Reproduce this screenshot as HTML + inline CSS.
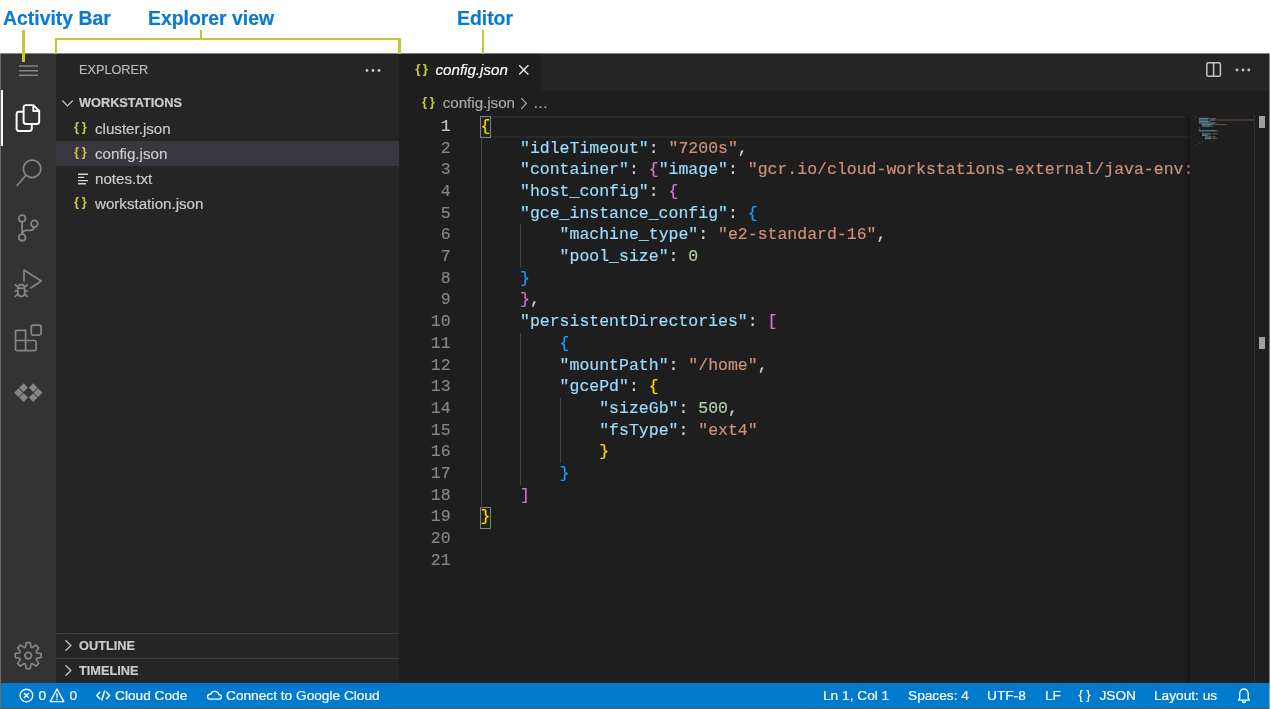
<!DOCTYPE html>
<html lang="en">
<head>
<meta charset="utf-8">
<title>Code editor layout</title>
<style>
*{box-sizing:border-box;margin:0;padding:0}
html,body{width:1271px;height:709px;overflow:hidden;background:#fff}
body{position:relative;font-family:"Liberation Sans",sans-serif;color:#ccc}
#all{position:absolute;left:0;top:0;width:1271px;height:709px;will-change:transform;-webkit-text-stroke:0.18px}
.abs{position:absolute}
.lbl{position:absolute;top:6px;font-weight:bold;font-size:19.4px;line-height:24px;color:#0a7ad1;white-space:nowrap}
.yl{position:absolute;background:#c6c532}
#frame{position:absolute;left:0;top:53px;width:1270px;height:656px;background:#6a6a6a;overflow:hidden}
#act{position:absolute;left:1px;top:0;width:55px;height:630px;background:#333}
#side{position:absolute;left:56px;top:0;width:343px;height:630px;background:#252526}
#ed{position:absolute;left:399px;top:0;width:871px;height:630px;background:#1e1e1e}
#status{position:absolute;left:1px;top:630px;width:1269px;height:25px;background:#007acc;color:#fff;font-size:13.7px}
#status span{position:absolute;top:0;line-height:26.8px;white-space:nowrap}
#status svg{position:absolute}
.row{position:absolute;left:0;width:343px;height:25px;line-height:25px;font-size:15.13px;color:#ccc;white-space:nowrap}
.row .nm{position:absolute;left:39px;top:0}
.hdr{position:absolute;left:0;width:343px;height:25px;line-height:24.6px;font-size:12.75px;font-weight:bold;color:#ccc;white-space:nowrap}
.hdr .nm{position:absolute;left:23px;top:0}
.jic{-webkit-text-stroke:0;position:absolute;font-family:"Liberation Sans",sans-serif;font-weight:bold;font-size:13px;color:#cbcb41;letter-spacing:2.6px;line-height:25px;top:-1.7px}
.row .jic{left:18px}
#tabs{position:absolute;left:0;top:0;width:871px;height:38px;background:#252526}
#tab{position:absolute;left:0;top:0;width:141.5px;height:38px;background:#1e1e1e}
#bc{position:absolute;left:0;top:37px;width:871px;height:25px;z-index:2;font-size:15.13px;color:#a9a9a9;line-height:26.8px;white-space:nowrap}
#code{position:absolute;left:0;top:62px;width:871px;height:568px;font-family:"Liberation Mono",monospace;font-size:16.5px;overflow:hidden}
.ln{position:absolute;left:0;width:51.6px;text-align:right;color:#858585;height:21.7px;line-height:21.7px}
.ln.cur{color:#c6c6c6}
.cl{position:absolute;left:81.4px;height:21.7px;line-height:21.7px;white-space:pre;color:#d4d4d4}
.k{color:#9cdcfe}.s{color:#ce9178}.n{color:#b5cea8}.b1{color:#ffd700}.b2{color:#da70d6}.b3{color:#179fff}
.ig{position:absolute;width:1.4px;background:#444}
.bm{position:absolute;width:11px;height:22px;border:1px solid #808080;background:rgba(0,100,0,.1)}
</style>
</head>
<body>
<div id="all">
<div class="lbl" style="left:3px">Activity Bar</div>
<div class="lbl" style="left:148px">Explorer view</div>
<div class="lbl" style="left:457px">Editor</div>
<div class="yl" style="left:22.1px;top:30px;width:2.6px;height:31.8px;z-index:5"></div>
<div class="yl" style="left:54.8px;top:38px;width:345.9px;height:2.3px"></div>
<div class="yl" style="left:54.8px;top:38px;width:2.5px;height:16.2px;z-index:5"></div>
<div class="yl" style="left:398.1px;top:38px;width:2.6px;height:16.2px;z-index:5"></div>
<div class="yl" style="left:200px;top:30.1px;width:2.2px;height:9px"></div>
<div class="yl" style="left:482px;top:30.2px;width:2.2px;height:24px;z-index:5"></div>

<div id="frame">
 <div class="abs" style="left:0;top:0;width:1270px;height:1px;background:rgba(255,255,255,.42);z-index:4"></div>
 <div class="abs" style="left:1269px;top:0;width:1px;height:656px;background:rgba(255,255,255,.45);z-index:4"></div>
 <div id="act">
  <div class="abs" style="left:0;top:37px;width:2.3px;height:55.7px;background:#fff"></div>
 </div>
 <svg class="abs" style="left:0;top:0" width="56" height="630" viewBox="0 53 56 630" fill="none" stroke="#858585" stroke-width="1.7">
  <!-- menu -->
  <path d="M19 66H38M19 70.7H38M19 75.3H38" stroke-width="1.6"/>
  <!-- files (active) -->
  <g stroke="#fff" stroke-linejoin="round" stroke-width="1.95">
   <path d="M26 105.1H33.3L39.2 110.9V121.6Q39.2 124 36.8 124H26Q23.6 124 23.6 121.6V107.5Q23.6 105.1 26 105.1Z"/>
   <path d="M33.3 105.1V110.9H39.2"/>
   <path d="M23.6 111.7H19Q16.6 111.7 16.6 114.1V128.6Q16.6 131 19 131H29.4Q31.8 131 31.8 128.6V124"/>
  </g>
  <!-- search -->
  <circle cx="32.1" cy="168.8" r="8.75" stroke-width="1.8"/>
  <path d="M25.9 175.4L16.6 186"/>
  <!-- source control -->
  <g stroke-width="1.8">
   <circle cx="22.1" cy="218.5" r="3.35"/><circle cx="34.4" cy="223.7" r="3.35"/><circle cx="22.1" cy="237.4" r="3.35"/>
   <path d="M22.1 221.8V234M34.2 227.1Q33.8 230.4 29.6 230.4H26.4Q22.6 230.6 22.1 234"/>
  </g>
  <!-- run and debug -->
  <path d="M24 281.6V270L41.3 281L30.3 288.2" stroke-linejoin="round"/>
  <g stroke-width="1.7">
   <path d="M17.9 288.5Q17.9 284.6 21.3 284.6Q24.7 284.6 24.7 288.5V292.5Q24.7 296.4 21.3 296.4Q17.9 296.4 17.9 292.5Z"/>
   <path d="M17.9 288.2H24.7"/>
   <path d="M17.9 287L14.8 284.4M24.7 287L27.8 284.4M17.9 291H14.4M24.7 291H28.2M17.9 294L14.8 296.8M24.7 294L27.8 296.8"/>
  </g>
  <!-- extensions -->
  <rect x="31.3" y="325.2" width="9.8" height="10" rx="1.6"/>
  <path d="M15.5 331.8Q15.5 330.3 17 330.3H25.6V340.5H34.6Q36.1 340.5 36.1 342V349.2Q36.1 350.7 34.6 350.7H17Q15.5 350.7 15.5 349.2ZM15.5 340.5H25.6V350.7"/>
  <!-- cloud code -->
  <g fill="#858585" stroke="none">
   <path d="M23.6 383.3L28 387.7L23.6 392.1L19.2 387.7Z"/>
   <path d="M18.6 388.3L23 392.7L18.6 397.1L14.2 392.7Z"/>
   <path d="M23.6 393.2L28 397.6L23.6 402L19.2 397.6Z"/>
   <path d="M33.2 383.3L37.6 387.7L33.2 392.1L28.8 387.7Z"/>
   <path d="M38.1 388.3L42.5 392.7L38.1 397.1L33.7 392.7Z"/>
   <path d="M33.2 393.2L37.6 397.6L33.2 402L28.8 397.6Z"/>
  </g>
  <!-- manage -->
  <path d="M25.38 647.16 L26.26 642.64 L30.14 642.64 L31.02 647.16 L32.17 647.64 L35.99 645.07 L38.73 647.81 L36.16 651.63 L36.64 652.78 L41.16 653.66 L41.16 657.54 L36.64 658.42 L36.16 659.57 L38.73 663.39 L35.99 666.13 L32.17 663.56 L31.02 664.04 L30.14 668.56 L26.26 668.56 L25.38 664.04 L24.23 663.56 L20.41 666.13 L17.67 663.39 L20.24 659.57 L19.76 658.42 L15.24 657.54 L15.24 653.66 L19.76 652.78 L20.24 651.63 L17.67 647.81 L20.41 645.07 L24.23 647.64Z" stroke-linejoin="round"/>
  <circle cx="28.2" cy="655.6" r="3.3"/>
 </svg>

 <div id="side">
  <div class="abs" style="left:23px;top:4.5px;font-size:12.7px;line-height:25px;color:#bbb">EXPLORER</div>
  <svg class="abs" style="left:308px;top:14.6px" width="18" height="6" viewBox="0 0 18 6" fill="#c5c5c5"><circle cx="3" cy="2.5" r="1.45"/><circle cx="9" cy="2.5" r="1.45"/><circle cx="15" cy="2.5" r="1.45"/></svg>
  <div class="hdr" style="top:38px"><svg class="abs" style="left:5px;top:8px" width="13" height="9" viewBox="0 0 13 9" fill="none" stroke="#c5c5c5" stroke-width="1.3"><path d="M1.3 1.5L6.5 6.9L11.7 1.5"/></svg><span class="nm">WORKSTATIONS</span></div>
  <div class="row" style="top:63px"><span class="jic">{}</span><span class="nm">cluster.json</span></div>
  <div class="row" style="top:88px;background:#37373d"><span class="jic">{}</span><span class="nm">config.json</span></div>
  <div class="row" style="top:113px"><svg class="abs" style="left:22px;top:7px" width="11" height="12" viewBox="0 0 11 12" stroke="#d4d7d6" stroke-width="1.4" fill="none"><path d="M0 1.2H10M0 4.4H6.2M0 7.6H10M0 10.8H8"/></svg><span class="nm">notes.txt</span></div>
  <div class="row" style="top:138px"><span class="jic">{}</span><span class="nm">workstation.json</span></div>
  <div class="hdr" style="top:580px;border-top:1px solid #3c3c3c"><svg class="abs" style="left:8px;top:5px" width="9" height="13" viewBox="0 0 9 13" fill="none" stroke="#c5c5c5" stroke-width="1.3"><path d="M1.5 1.3L6.9 6.5L1.5 11.7"/></svg><span class="nm">OUTLINE</span></div>
  <div class="hdr" style="top:605px;border-top:1px solid #3c3c3c"><svg class="abs" style="left:8px;top:5px" width="9" height="13" viewBox="0 0 9 13" fill="none" stroke="#c5c5c5" stroke-width="1.3"><path d="M1.5 1.3L6.9 6.5L1.5 11.7"/></svg><span class="nm">TIMELINE</span></div>
 </div>

 <div id="ed">
  <div id="tabs">
   <div id="tab">
    <span class="jic" style="left:16.2px;top:2.6px;font-size:13.5px;letter-spacing:2.3px">{}</span>
    <span class="abs" style="left:36.5px;top:4.3px;font-size:15.13px;line-height:25px;font-style:italic;color:#fff;white-space:nowrap">config.json</span>
    <svg class="abs" style="left:119px;top:11.4px" width="12" height="12" viewBox="0 0 12 12" stroke="#e8e8e8" stroke-width="1.4" fill="none"><path d="M1.2 1.2L10.4 10.4M10.4 1.2L1.2 10.4"/></svg>
   </div>
   <svg class="abs" style="left:806px;top:8px" width="18" height="18" viewBox="0 0 18 18" fill="none" stroke="#c5c5c5" stroke-width="1.5"><rect x="1.8" y="1.7" width="13.6" height="13.6" rx="1.6"/><path d="M8.6 1.7V15.3"/></svg>
   <svg class="abs" style="left:835px;top:14px" width="18" height="6" viewBox="0 0 18 6" fill="#c5c5c5"><circle cx="3" cy="3" r="1.45"/><circle cx="9" cy="3" r="1.45"/><circle cx="14.8" cy="3" r="1.45"/></svg>
  </div>
  <div id="bc">
   <span class="jic" style="left:23.1px;top:-0.7px;line-height:25px">{}</span>
   <span class="abs" style="left:43.7px;top:0">config.json</span>
   <svg class="abs" style="left:121px;top:7px" width="8" height="13" viewBox="0 0 8 13" fill="none" stroke="#a9a9a9" stroke-width="1.2"><path d="M1.2 1.2L6.4 6.5L1.2 11.8"/></svg>
   <span class="abs" style="left:134px;top:0">…</span>
  </div>
  <div id="code">
   <div class="abs" style="left:81px;top:1px;width:710px;height:22px;border-top:2px solid #282828;border-bottom:2px solid #282828"></div>
   <div class="ig" style="left:81.5px;top:22.50px;height:368.90px"></div>
   <div class="ig" style="left:121.0px;top:109.30px;height:43.40px"></div>
   <div class="ig" style="left:121.0px;top:217.80px;height:151.90px"></div>
   <div class="ig" style="left:160.7px;top:282.90px;height:65.10px"></div>
   <div class="bm" style="left:81px;top:1px"></div>
   <div class="bm" style="left:81px;top:392px"></div>
<div class="ln cur" style="top:0.80px">1</div><div class="cl" style="top:0.80px"><span class="b1">{</span></div>
<div class="ln" style="top:22.50px">2</div><div class="cl" style="top:22.50px">    <span class="k">"idleTimeout"</span>: <span class="s">"7200s"</span>,</div>
<div class="ln" style="top:44.20px">3</div><div class="cl" style="top:44.20px">    <span class="k">"container"</span>: <span class="b2">{</span><span class="k">"image"</span>: <span class="s">"gcr.io/cloud-workstations-external/java-env:latest"</span><span class="b2">}</span>,</div>
<div class="ln" style="top:65.90px">4</div><div class="cl" style="top:65.90px">    <span class="k">"host_config"</span>: <span class="b2">{</span></div>
<div class="ln" style="top:87.60px">5</div><div class="cl" style="top:87.60px">    <span class="k">"gce_instance_config"</span>: <span class="b3">{</span></div>
<div class="ln" style="top:109.30px">6</div><div class="cl" style="top:109.30px">        <span class="k">"machine_type"</span>: <span class="s">"e2-standard-16"</span>,</div>
<div class="ln" style="top:131.00px">7</div><div class="cl" style="top:131.00px">        <span class="k">"pool_size"</span>: <span class="n">0</span></div>
<div class="ln" style="top:152.70px">8</div><div class="cl" style="top:152.70px">    <span class="b3">}</span></div>
<div class="ln" style="top:174.40px">9</div><div class="cl" style="top:174.40px">    <span class="b2">}</span>,</div>
<div class="ln" style="top:196.10px">10</div><div class="cl" style="top:196.10px">    <span class="k">"persistentDirectories"</span>: <span class="b2">[</span></div>
<div class="ln" style="top:217.80px">11</div><div class="cl" style="top:217.80px">        <span class="b3">{</span></div>
<div class="ln" style="top:239.50px">12</div><div class="cl" style="top:239.50px">        <span class="k">"mountPath"</span>: <span class="s">"/home"</span>,</div>
<div class="ln" style="top:261.20px">13</div><div class="cl" style="top:261.20px">        <span class="k">"gcePd"</span>: <span class="b1">{</span></div>
<div class="ln" style="top:282.90px">14</div><div class="cl" style="top:282.90px">            <span class="k">"sizeGb"</span>: <span class="n">500</span>,</div>
<div class="ln" style="top:304.60px">15</div><div class="cl" style="top:304.60px">            <span class="k">"fsType"</span>: <span class="s">"ext4"</span></div>
<div class="ln" style="top:326.30px">16</div><div class="cl" style="top:326.30px">            <span class="b1">}</span></div>
<div class="ln" style="top:348.00px">17</div><div class="cl" style="top:348.00px">        <span class="b3">}</span></div>
<div class="ln" style="top:369.70px">18</div><div class="cl" style="top:369.70px">    <span class="b2">]</span></div>
<div class="ln" style="top:391.40px">19</div><div class="cl" style="top:391.40px"><span class="b1">}</span></div>
<div class="ln" style="top:413.10px">20</div><div class="cl" style="top:413.10px"></div>
<div class="ln" style="top:434.80px">21</div><div class="cl" style="top:434.80px"></div>
   <!-- minimap -->
   <div class="abs" style="left:791px;top:0;width:64px;height:568px;background:#1e1e1e"></div>
   <div class="abs" style="left:784px;top:0;width:7px;height:568px;background:linear-gradient(90deg,rgba(0,0,0,0),rgba(0,0,0,.35))"></div>
   <svg class="abs" style="left:0;top:0" width="871" height="60" viewBox="0 0 871 60"><rect x="796.80" y="1.30" width="0.77" height="1.15" fill="#d4d4d4" opacity="0.28"/><rect x="799.88" y="2.84" width="10.01" height="1.15" fill="#9cdcfe" opacity="0.52"/><rect x="809.89" y="2.84" width="0.77" height="1.15" fill="#d4d4d4" opacity="0.28"/><rect x="811.43" y="2.84" width="5.39" height="1.15" fill="#ce9178" opacity="0.40"/><rect x="816.82" y="2.84" width="0.77" height="1.15" fill="#d4d4d4" opacity="0.28"/><rect x="799.88" y="4.39" width="8.47" height="1.15" fill="#9cdcfe" opacity="0.52"/><rect x="808.35" y="4.39" width="0.77" height="1.15" fill="#d4d4d4" opacity="0.28"/><rect x="809.89" y="4.39" width="0.77" height="1.15" fill="#d4d4d4" opacity="0.28"/><rect x="810.66" y="4.39" width="5.39" height="1.15" fill="#9cdcfe" opacity="0.52"/><rect x="816.05" y="4.39" width="0.77" height="1.15" fill="#d4d4d4" opacity="0.28"/><rect x="817.59" y="4.39" width="37.41" height="1.15" fill="#ce9178" opacity="0.40"/><rect x="799.88" y="5.93" width="10.01" height="1.15" fill="#9cdcfe" opacity="0.52"/><rect x="809.89" y="5.93" width="0.77" height="1.15" fill="#d4d4d4" opacity="0.28"/><rect x="811.43" y="5.93" width="0.77" height="1.15" fill="#d4d4d4" opacity="0.28"/><rect x="799.88" y="7.48" width="16.17" height="1.15" fill="#9cdcfe" opacity="0.52"/><rect x="816.05" y="7.48" width="0.77" height="1.15" fill="#d4d4d4" opacity="0.28"/><rect x="817.59" y="7.48" width="0.77" height="1.15" fill="#d4d4d4" opacity="0.28"/><rect x="802.96" y="9.02" width="10.78" height="1.15" fill="#9cdcfe" opacity="0.52"/><rect x="813.74" y="9.02" width="0.77" height="1.15" fill="#d4d4d4" opacity="0.28"/><rect x="815.28" y="9.02" width="12.32" height="1.15" fill="#ce9178" opacity="0.40"/><rect x="827.60" y="9.02" width="0.77" height="1.15" fill="#d4d4d4" opacity="0.28"/><rect x="802.96" y="10.57" width="8.47" height="1.15" fill="#9cdcfe" opacity="0.52"/><rect x="811.43" y="10.57" width="0.77" height="1.15" fill="#d4d4d4" opacity="0.28"/><rect x="812.97" y="10.57" width="0.77" height="1.15" fill="#b5cea8" opacity="0.50"/><rect x="799.88" y="12.11" width="0.77" height="1.15" fill="#d4d4d4" opacity="0.28"/><rect x="799.88" y="13.66" width="0.77" height="1.15" fill="#d4d4d4" opacity="0.28"/><rect x="800.65" y="13.66" width="0.77" height="1.15" fill="#d4d4d4" opacity="0.28"/><rect x="799.88" y="15.20" width="17.71" height="1.15" fill="#9cdcfe" opacity="0.52"/><rect x="817.59" y="15.20" width="0.77" height="1.15" fill="#d4d4d4" opacity="0.28"/><rect x="819.13" y="15.20" width="0.77" height="1.15" fill="#d4d4d4" opacity="0.28"/><rect x="802.96" y="16.75" width="0.77" height="1.15" fill="#d4d4d4" opacity="0.28"/><rect x="802.96" y="18.29" width="8.47" height="1.15" fill="#9cdcfe" opacity="0.52"/><rect x="811.43" y="18.29" width="0.77" height="1.15" fill="#d4d4d4" opacity="0.28"/><rect x="812.97" y="18.29" width="5.39" height="1.15" fill="#ce9178" opacity="0.40"/><rect x="818.36" y="18.29" width="0.77" height="1.15" fill="#d4d4d4" opacity="0.28"/><rect x="802.96" y="19.84" width="5.39" height="1.15" fill="#9cdcfe" opacity="0.52"/><rect x="808.35" y="19.84" width="0.77" height="1.15" fill="#d4d4d4" opacity="0.28"/><rect x="809.89" y="19.84" width="0.77" height="1.15" fill="#d4d4d4" opacity="0.28"/><rect x="806.04" y="21.38" width="6.16" height="1.15" fill="#9cdcfe" opacity="0.52"/><rect x="812.20" y="21.38" width="0.77" height="1.15" fill="#d4d4d4" opacity="0.28"/><rect x="813.74" y="21.38" width="2.31" height="1.15" fill="#b5cea8" opacity="0.50"/><rect x="816.05" y="21.38" width="0.77" height="1.15" fill="#d4d4d4" opacity="0.28"/><rect x="806.04" y="22.93" width="6.16" height="1.15" fill="#9cdcfe" opacity="0.52"/><rect x="812.20" y="22.93" width="0.77" height="1.15" fill="#d4d4d4" opacity="0.28"/><rect x="813.74" y="22.93" width="4.62" height="1.15" fill="#ce9178" opacity="0.40"/><rect x="806.04" y="24.47" width="0.77" height="1.15" fill="#d4d4d4" opacity="0.28"/><rect x="802.96" y="26.02" width="0.77" height="1.15" fill="#d4d4d4" opacity="0.28"/><rect x="799.88" y="27.56" width="0.77" height="1.15" fill="#d4d4d4" opacity="0.28"/><rect x="796.80" y="29.11" width="0.77" height="1.15" fill="#d4d4d4" opacity="0.28"/></svg>
   <div class="abs" style="left:855px;top:0;width:16px;height:568px;background:#1e1e1e;border-left:1px solid #303030"></div>
   <div class="abs" style="left:860px;top:1px;width:6px;height:12px;background:#a0a0a0"></div>
   <div class="abs" style="left:860px;top:222px;width:6px;height:12px;background:#a0a0a0"></div>
  </div>
 </div>

 <div class="abs" style="left:0;top:655px;width:1270px;height:1px;background:#555"></div>
 <div id="status">
  <svg style="left:17.5px;top:5.3px" width="15" height="15" viewBox="0 0 15 15" fill="none" stroke="#fff" stroke-width="1.35"><circle cx="7.4" cy="7.5" r="6.3"/><path d="M4.9 5L9.9 10M9.9 5L4.9 10"/></svg>
  <span style="left:37.4px">0</span>
  <svg style="left:48.3px;top:5px" width="16" height="15" viewBox="0 0 16 15" fill="none" stroke="#fff" stroke-width="1.35" stroke-linejoin="round"><path d="M8 1L14.8 13.6H1.2Z"/><path d="M8 5.2V9.8M8 10.8V12.2"/></svg>
  <span style="left:68.6px">0</span>
  <svg style="left:94px;top:6.3px" width="17" height="13" viewBox="0 0 17 13" fill="none" stroke="#fff" stroke-width="1.45"><path d="M5.2 2.8L1.8 6.5L5.2 10.2M11.2 2.8L14.5 6.5L11.2 10.2M9.7 1.5L6.7 11.5"/></svg>
  <span style="left:114px">Cloud Code</span>
  <svg style="left:204.6px;top:6.4px" width="17" height="13" viewBox="0 0 17 13" fill="none" stroke="#fff" stroke-width="1.3" stroke-linejoin="round"><path d="M4.3 10.2H12.8Q15.4 10.2 15.4 7.9Q15.4 5.8 12.9 5.7Q12.3 2.4 8.7 2.4Q5.6 2.4 4.7 5.2Q1.5 5.3 1.5 7.8Q1.5 10.2 4.3 10.2Z"/></svg>
  <span style="left:225px">Connect to Google Cloud</span>
  <span style="left:822px">Ln 1, Col 1</span>
  <span style="left:907px">Spaces: 4</span>
  <span style="left:986px">UTF-8</span>
  <span style="left:1044px">LF</span>
  <span style="left:1077.6px;top:-0.8px;font-size:13px;letter-spacing:3.2px">{}</span>
  <span style="left:1098.5px">JSON</span>
  <span style="left:1153px">Layout: us</span>
  <svg style="left:1234.9px;top:4.8px" width="16" height="16" viewBox="0 0 16 16" fill="none" stroke="#fff" stroke-width="1.3" stroke-linejoin="round"><path d="M2.4 12.1L3.7 10.3V6.3Q3.7 1 7.95 1Q12.2 1 12.2 6.3V10.3L13.5 12.1Z"/><path d="M6.4 12.3Q6.4 14.6 7.95 14.6Q9.5 14.6 9.5 12.3"/></svg>
 </div>
</div>
</div>
</body>
</html>
